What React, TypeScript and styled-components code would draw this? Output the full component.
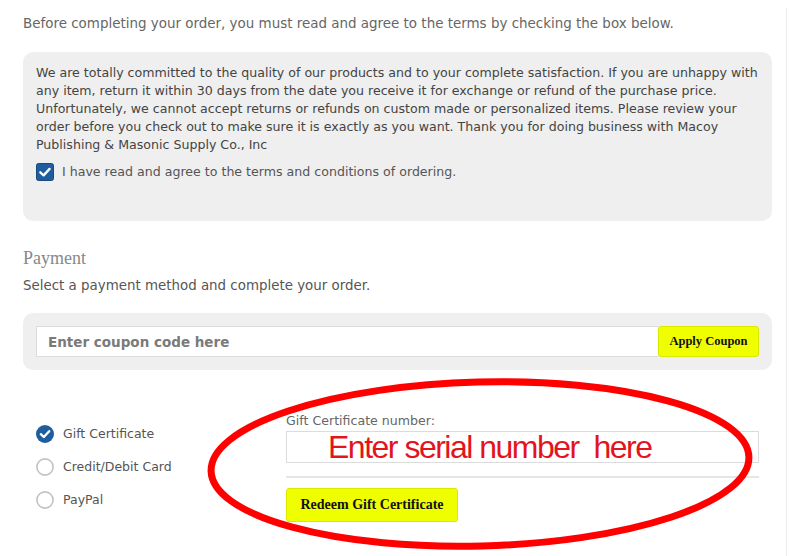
import React from "react";
import styled, { createGlobalStyle } from "styled-components";

const Global = createGlobalStyle`
  html, body { margin: 0; padding: 0; background: #fff; }
  body { font-family: "DejaVu Sans", Verdana, sans-serif; color: #555; }
  * { box-sizing: border-box; }
`;

const Page = styled.div`
  width: 787px;
  margin-top: 8px;
  min-height: 548px;
  padding: 7px 14px 0 23px;
  border-right: 1px solid #ececec;
`;

const Intro = styled.p`
  margin: 0;
  font-size: 13.45px;
  line-height: 18px;
  color: #666;
`;

const GreyBox = styled.div<{ $pad: string }>`
  background: #efefef;
  border-radius: 10px;
  padding: ${(p) => p.$pad};
`;

const TermsBox = styled(GreyBox)`
  margin-top: 19px;
`;

const TermsText = styled.p`
  margin: 0;
  font-size: 12.6px;
  line-height: 18px;
  color: #444;
`;

const AgreeRow = styled.label`
  display: flex;
  align-items: center;
  gap: 8px;
  margin-top: 9px;
  font-size: 12.6px;
  line-height: 18px;
  color: #555;
`;

const Heading = styled.h2`
  margin: 26px 0 0;
  font-family: "Liberation Serif", "Times New Roman", serif;
  font-weight: normal;
  font-size: 18px;
  line-height: 22px;
  color: #888;
`;

const SubText = styled.p`
  margin: 8px 0 0;
  font-size: 13.4px;
  line-height: 18px;
  color: #555;
`;

const CouponBox = styled(GreyBox)`
  margin-top: 18px;
  display: flex;
`;

const CouponInput = styled.div`
  flex: 1;
  height: 31px;
  background: #fff;
  border: 1px solid #dcdcdc;
  border-right: none;
  display: flex;
  align-items: center;
  padding-left: 11px;
  font-size: 13.5px;
  font-weight: bold;
  color: #7a7a7a;
`;

const YellowButton = styled.button<{ $w: number; $h: number; $fs: number }>`
  width: ${(p) => p.$w}px;
  height: ${(p) => p.$h}px;
  background: #efff00;
  border: 1px solid #dde800;
  border-radius: 3px;
  font-family: "Liberation Serif", "Times New Roman", serif;
  font-weight: bold;
  font-size: ${(p) => p.$fs}px;
  color: #111;
  padding: 0;
  cursor: pointer;
`;

const PaymentArea = styled.div`
  position: relative;
  margin-top: 43px;
  padding: 0 13px;
  display: grid;
  grid-template-columns: 250px 1fr;
`;

const MethodList = styled.div`
  display: flex;
  flex-direction: column;
  padding-top: 4px;
`;

const MethodRow = styled.label`
  display: flex;
  align-items: center;
  gap: 9px;
  height: 33px;
  font-size: 12.5px;
  color: #555;
`;

const GiftColumn = styled.div`
  display: flex;
  flex-direction: column;
  align-items: flex-start;
`;

const FieldLabel = styled.div`
  font-size: 12.6px;
  line-height: 16px;
  color: #666;
`;

const SerialInput = styled.div`
  align-self: stretch;
  margin-top: 2px;
  height: 32px;
  border: 1px solid #dcdcdc;
  background: #fff;
  display: flex;
  align-items: center;
  padding-left: 41px;
  font-family: "Liberation Sans", Arial, sans-serif;
  font-size: 32px;
  letter-spacing: -1.5px;
  color: #e3141c;
  white-space: pre;
  overflow: visible;
`;

const Divider = styled.hr`
  align-self: stretch;
  margin: 13px 0 0;
  border: none;
  height: 2px;
  background: #e6e6e6;
`;

const RedeemWrap = styled.div`
  margin-top: 10px;
`;

const Annotation = styled.svg`
  position: absolute;
  left: 177px;
  top: -40px;
  pointer-events: none;
`;

const Checkbox = () => (
  <svg width="18" height="18" viewBox="0 0 18 18">
    <rect x="0.5" y="0.5" width="17" height="17" rx="2" fill="#1f5e9e" stroke="#184a7c" />
    <path d="M4.3 9.3 L7.6 12.4 L13.6 5.9" fill="none" stroke="#fff" strokeWidth="2.3" strokeLinecap="round" strokeLinejoin="round" />
  </svg>
);

const Radio = ({ checked }: { checked?: boolean }) =>
  checked ? (
    <svg width="18" height="18" viewBox="0 0 18 18">
      <circle cx="9" cy="9" r="9" fill="#1f5e9e" />
      <path d="M4.8 9.2 L7.8 12 L13.2 6.2" fill="none" stroke="#fff" strokeWidth="2.3" strokeLinecap="round" strokeLinejoin="round" />
    </svg>
  ) : (
    <svg width="18" height="18" viewBox="0 0 18 18">
      <circle cx="9" cy="9" r="8.1" fill="#fff" stroke="#c2c2c2" strokeWidth="1.6" />
    </svg>
  );

export default function App() {
  return (
    <>
      <Global />
      <Page>
        <Intro>
          Before completing your order, you must read and agree to the terms by checking the box below.
        </Intro>
        <TermsBox $pad="12px 13px 40px">
          <TermsText>
            We are totally committed to the quality of our products and to your complete satisfaction. If you are unhappy with any item, return it within 30 days from the date you receive it for exchange or refund of the purchase price. Unfortunately, we cannot accept returns or refunds on custom made or personalized items. Please review your order before you check out to make sure it is exactly as you want. Thank you for doing business with Macoy Publishing &amp; Masonic Supply Co., Inc
          </TermsText>
          <AgreeRow>
            <Checkbox />
            I have read and agree to the terms and conditions of ordering.
          </AgreeRow>
        </TermsBox>

        <Heading>Payment</Heading>
        <SubText>Select a payment method and complete your order.</SubText>

        <CouponBox $pad="13px 13px">
          <CouponInput>Enter coupon code here</CouponInput>
          <YellowButton $w={101} $h={31} $fs={12.5}>Apply Coupon</YellowButton>
        </CouponBox>

        <PaymentArea>
          <MethodList>
            <MethodRow>
              <Radio checked />
              Gift Certificate
            </MethodRow>
            <MethodRow>
              <Radio />
              Credit/Debit Card
            </MethodRow>
            <MethodRow>
              <Radio />
              PayPal
            </MethodRow>
          </MethodList>
          <GiftColumn>
            <FieldLabel>Gift Certificate number:</FieldLabel>
            <SerialInput>Enter serial number  here</SerialInput>
            <Divider />
            <RedeemWrap>
              <YellowButton $w={172} $h={34} $fs={14}>Redeem Gift Certificate</YellowButton>
            </RedeemWrap>
          </GiftColumn>
          <Annotation width="560" height="184" viewBox="0 0 560 184">
            <ellipse cx="280" cy="91" rx="269" ry="82" fill="none" stroke="#ff0000" strokeWidth="7" transform="rotate(-1.5 280 91)" />
          </Annotation>
        </PaymentArea>
      </Page>
    </>
  );
}
